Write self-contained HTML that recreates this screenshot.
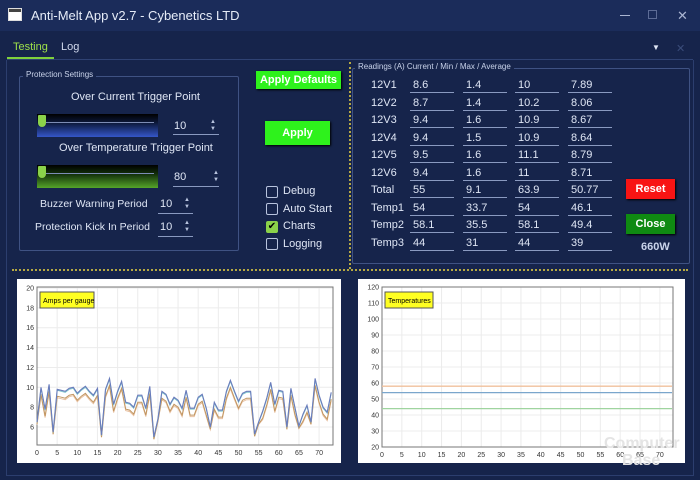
<!DOCTYPE html>
<html><head><meta charset="utf-8"><style>
*{box-sizing:border-box;margin:0;padding:0}
body{width:700px;height:480px;overflow:hidden;background:#16244b;font-family:"Liberation Sans",sans-serif;color:#dfe6f5;position:relative}
.a{position:absolute}
.title{left:0;top:0;width:700px;height:31px;background:#1b2c5a}
.t{font-size:11px;white-space:nowrap}
.fs{border:1px solid #3f5283;border-radius:2px}
.leg{font-size:8px;background:#16244b;padding:0 3px;color:#c9d3ea}
.ul{border-bottom:1px solid #8a9ac0;height:15px;font-size:11px;padding-left:3px;line-height:14px}
.btn{font-weight:bold;font-size:11px;color:#fff;text-align:center;box-shadow:1px 1px 2px #000}
.cb{width:12px;height:12px;border:1.5px solid #b8c3de;border-radius:2px}
.spin{font-size:6px;color:#b8c3de;line-height:7px}
</style></head><body>
<div class="a title"></div>
<div class="a" style="left:8px;top:8px;width:14px;height:13px;border:1.5px solid #ddd;background:#fff"><div style="height:3px;background:#444"></div></div>
<div class="a t" style="left:31px;top:8px;font-size:13px;color:#e6ecf8">Anti-Melt App v2.7 - Cybenetics LTD</div>
<div class="a" style="left:620px;top:15px;width:10px;height:1px;background:#aab5d2"></div>
<div class="a" style="left:648px;top:10px;width:9px;height:9px;border:1px solid #5d6c96"></div>
<div class="a t" style="left:677px;top:8px;font-size:13px;color:#aab5d2">✕</div>

<div class="a t" style="left:13px;top:41px;color:#9ee24a">Testing</div>
<div class="a t" style="left:61px;top:41px;color:#d0d8ec">Log</div>
<div class="a" style="left:7px;top:57px;width:47px;height:2px;background:#7fd13c"></div>
<div class="a" style="left:7px;top:59px;width:686px;height:1px;background:#2f4273"></div>
<div class="a t" style="left:652px;top:43px;font-size:8px">▼</div>
<div class="a t" style="left:676px;top:42px;color:#3a4c7a">✕</div>
<div class="a" style="left:6px;top:60px;width:688px;height:416px;border:1px solid #2c3e6e;border-top:none"></div>

<div class="a" style="left:349px;top:62px;height:207px;border-left:2px dotted #b5a842"></div>
<div class="a" style="left:12px;top:269px;width:676px;border-top:2px dotted #b5a842"></div>

<div class="a fs" style="left:19px;top:76px;width:220px;height:175px"></div>
<div class="a leg" style="left:23px;top:70px">Protection Settings</div>
<div class="a t" style="left:71px;top:91px">Over Current Trigger Point</div>
<div class="a" style="left:37px;top:114px;width:121px;height:23px;background:linear-gradient(#000 0%,#0d1a3e 40%,#3556c8 100%)"></div>
<div class="a" style="left:40px;top:122px;width:114px;height:1px;background:#7d8cb5"></div>
<div class="a" style="left:38px;top:115px;width:8px;height:12px;background:#8bd24a;border-radius:1px 1px 4px 4px"></div>
<div class="a t" style="left:174px;top:120px">10</div>
<div class="a" style="left:173px;top:134px;width:46px;height:1px;background:#8a9ac0"></div>
<div class="a spin" style="left:210px;top:119px">▲<br>▼</div>
<div class="a t" style="left:59px;top:142px">Over Temperature Trigger Point</div>
<div class="a" style="left:37px;top:165px;width:121px;height:23px;background:linear-gradient(#000 0%,#13300a 40%,#55a42a 100%)"></div>
<div class="a" style="left:40px;top:173px;width:114px;height:1px;background:#7d8cb5"></div>
<div class="a" style="left:38px;top:166px;width:8px;height:12px;background:#8bd24a;border-radius:1px 1px 4px 4px"></div>
<div class="a t" style="left:174px;top:171px">80</div>
<div class="a" style="left:173px;top:186px;width:46px;height:1px;background:#8a9ac0"></div>
<div class="a spin" style="left:213px;top:170px">▲<br>▼</div>
<div class="a t" style="left:40px;top:198px;font-size:10.5px">Buzzer Warning Period</div>
<div class="a t" style="left:160px;top:198px">10</div>
<div class="a" style="left:158px;top:213px;width:35px;height:1px;background:#8a9ac0"></div>
<div class="a spin" style="left:184px;top:197px">▲<br>▼</div>
<div class="a t" style="left:35px;top:221px;font-size:10.5px">Protection Kick In Period</div>
<div class="a t" style="left:160px;top:221px">10</div>
<div class="a" style="left:158px;top:236px;width:35px;height:1px;background:#8a9ac0"></div>
<div class="a spin" style="left:184px;top:220px">▲<br>▼</div>

<div class="a btn" style="left:256px;top:71px;width:85px;height:18px;line-height:18px;background:#2ef21c">Apply Defaults</div>
<div class="a btn" style="left:265px;top:121px;width:65px;height:24px;line-height:24px;background:#2ef21c">Apply</div>
<div class="a cb" style="left:266px;top:186px"></div><div class="a t" style="left:283px;top:185px">Debug</div>
<div class="a cb" style="left:266px;top:203px"></div><div class="a t" style="left:283px;top:203px">Auto Start</div>
<div class="a cb" style="left:266px;top:221px;background:#8bd24a;border-color:#8bd24a;color:#000;font-size:10px;line-height:9px;text-align:center">✔</div><div class="a t" style="left:283px;top:220px">Charts</div>
<div class="a cb" style="left:266px;top:238px"></div><div class="a t" style="left:283px;top:238px">Logging</div>

<div class="a fs" style="left:352px;top:68px;width:338px;height:196px"></div>
<div class="a leg" style="left:355px;top:62px">Readings (A) Current / Min / Max / Average</div>
<div id="rd"></div>
<div class="a btn" style="left:626px;top:179px;width:49px;height:20px;line-height:20px;background:#f81414">Reset</div>
<div class="a btn" style="left:626px;top:214px;width:49px;height:20px;line-height:20px;background:#0f8a12">Close</div>
<div class="a t" style="left:641px;top:241px;font-weight:bold;color:#c9d3ea">660W</div>

<div class="a" style="left:17px;top:279px;width:324px;height:184px;background:#fff"></div>
<div class="a" style="left:358px;top:279px;width:327px;height:184px;background:#fff"></div>
<svg class="a" style="left:0;top:0" width="700" height="480" id="sv"></svg>
<script>
var rows=[["12V1","8.6","1.4","10","7.89"],["12V2","8.7","1.4","10.2","8.06"],["12V3","9.4","1.6","10.9","8.67"],["12V4","9.4","1.5","10.9","8.64"],["12V5","9.5","1.6","11.1","8.79"],["12V6","9.4","1.6","11","8.71"],["Total","55","9.1","63.9","50.77"],["Temp1","54","33.7","54","46.1"],["Temp2","58.1","35.5","58.1","49.4"],["Temp3","44","31","44","39"]];
var h="";rows.forEach(function(r,i){var y=78+i*17.5;h+='<div class="a t" style="left:371px;top:'+(y+1)+'px">'+r[0]+'</div>';[410,463,515,568].forEach(function(x,j){h+='<div class="a ul" style="left:'+x+'px;top:'+y+'px;width:44px">'+r[j+1]+'</div>'})});
document.getElementById("rd").innerHTML=h;
var s="";
function grid(x0,x1,y0,y1,xs,xmax,ys,ymin,ystep,yn){
 for(var v=0;v<=70;v+=5){var x=x0+v*xs;s+='<line x1="'+x+'" y1="'+y0+'" x2="'+x+'" y2="'+y1+'" stroke="#ececec"/>';s+='<text x="'+x+'" y="'+(y1+10)+'" font-size="7" text-anchor="middle" fill="#333">'+v+'</text>'}
 for(var k=0;k<yn;k++){var val=ymin+k*ystep;var y=ys(val);s+='<line x1="'+x0+'" y1="'+y+'" x2="'+x1+'" y2="'+y+'" stroke="#ececec"/>';s+='<text x="'+(x0-3)+'" y="'+(y+2.5)+'" font-size="7" text-anchor="end" fill="#333">'+val+'</text>'}
 s+='<rect x="'+x0+'" y="'+y0+'" width="'+(x1-x0)+'" height="'+(y1-y0)+'" fill="none" stroke="#777"/>';
}
var y1f=function(v){return 288+(20-v)*9.93};
grid(37,333,287,445,4.03,73,y1f,6,2,8);
var d=[6.5,10,7.8,10.3,5.5,9.8,9.7,9.6,9.9,10,9.4,9.8,10.1,9.6,9.2,9.9,5.2,9.8,10.9,8.3,9.6,10.6,8.5,8.4,8,9.2,9.2,7.9,10.1,5,6.8,9.6,9.3,8.3,9,8.7,7.9,9.7,7.9,7.9,9,9.3,7.9,6,8.5,7.7,7.7,9.6,10.7,9.6,8.6,9.4,9.6,9.6,5.3,6.5,7.6,8.9,10.5,8.3,9.7,9.6,6,9.9,8,6.1,7.3,8.2,6.5,10.9,9.2,8,7.5,9.5];
function pl(off,col,w){var p=d.map(function(v,i){var vv=v<7?v-off*0.3:v-off;return (37+i*4.03).toFixed(1)+","+y1f(vv).toFixed(1)}).join(" ");s+='<polyline points="'+p+'" fill="none" stroke="'+col+'" stroke-width="'+w+'"/>'}
pl(0.85,"#e8c0a0",1);pl(0.7,"#c09560",1);pl(0.1,"#7fc6cc",1);pl(0,"#6a7cbc",1.1);
s+='<rect x="40" y="292" width="54" height="16" fill="#ffff22" stroke="#555"/><text x="43" y="303" font-size="7" fill="#000">Amps per gauge</text>';
var y2f=function(v){return 447-(v-20)*1.6};
grid(382,673,287,447,3.97,73,y2f,20,10,11);
[[58,"#f0c09c"],[54,"#7aa6cc"],[44,"#9fd49f"]].forEach(function(a){s+='<line x1="382" y1="'+y2f(a[0])+'" x2="672" y2="'+y2f(a[0])+'" stroke="'+a[1]+'" stroke-width="1.3"/>'});
s+='<rect x="385" y="292" width="48" height="16" fill="#ffff22" stroke="#555"/><text x="388" y="303" font-size="7" fill="#000">Temperatures</text>';
s+='<text x="604" y="448" font-size="16" font-weight="bold" fill="#e4e4e4">Computer</text><text x="622" y="465" font-size="16" font-weight="bold" fill="#e4e4e4">Base</text>';
document.getElementById("sv").innerHTML=s;
</script>
</body></html>
